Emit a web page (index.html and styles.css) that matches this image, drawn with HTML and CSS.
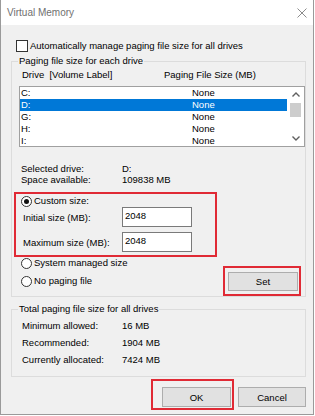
FILE: index.html
```html
<!DOCTYPE html>
<html lang="en">
<head>
  <meta charset="UTF-8">
  <title>Virtual Memory</title>
  <link rel="stylesheet" href="styles.css">
</head>
<body>
  <div class="window">
    <div class="titlebar">
      <span class="title">Virtual Memory</span>
      <svg class="close" width="10" height="10" viewBox="0 0 10 10">
        <path d="M0.5 0.5L9.5 9.5M9.5 0.5L0.5 9.5" stroke="#8c8c8c" stroke-width="1" fill="none"/>
      </svg>
    </div>

    <div class="content">
      <label class="check-row"><span class="checkbox"></span>Automatically manage paging file size for all drives</label>

      <fieldset class="group group-drives">
        <legend>Paging file size for each drive</legend>
        <div class="list-head">
          <span class="col-drive">Drive&nbsp; [Volume Label]</span>
          <span>Paging File Size (MB)</span>
        </div>
        <div class="listbox">
          <ul class="rows">
            <li><span class="col-drive">C:</span><span>None</span></li>
            <li class="selected"><span class="col-drive">D:</span><span>None</span></li>
            <li><span class="col-drive">G:</span><span>None</span></li>
            <li><span class="col-drive">H:</span><span>None</span></li>
            <li><span class="col-drive">I:</span><span>None</span></li>
          </ul>
          <div class="scrollbar">
            <div class="arrow">
              <svg width="8" height="5" viewBox="0 0 8 5"><path d="M0.5 4.5L4 1L7.5 4.5" stroke="#606060" stroke-width="1.4" fill="none"/></svg>
            </div>
            <div class="thumb"></div>
            <div class="arrow arrow-down">
              <svg width="8" height="5" viewBox="0 0 8 5"><path d="M0.5 0.5L4 4L7.5 0.5" stroke="#606060" stroke-width="1.4" fill="none"/></svg>
            </div>
          </div>
        </div>

        <div class="info">
          <div class="info-row"><span class="info-label">Selected drive:</span><span>D:</span></div>
          <div class="info-row"><span class="info-label">Space available:</span><span>109838 MB</span></div>
        </div>

        <div class="highlight custom-box">
          <div class="radio-row"><span class="radio on"></span>Custom size:</div>
          <div class="field-row">
            <span class="field-label">Initial size (MB):</span>
            <input class="field" type="text" value="2048">
          </div>
          <div class="field-row second">
            <span class="field-label">Maximum size (MB):</span>
            <input class="field" type="text" value="2048">
          </div>
        </div>

        <div class="bottom-row">
          <div class="radios">
            <div class="radio-row"><span class="radio"></span>System managed size</div>
            <div class="radio-row gap"><span class="radio"></span>No paging file</div>
          </div>
          <div class="highlight set-box">
            <button class="btn btn-set">Set</button>
          </div>
        </div>
      </fieldset>

      <fieldset class="group group-total">
        <legend>Total paging file size for all drives</legend>
        <div class="total-row"><span class="total-label">Minimum allowed:</span><span>16 MB</span></div>
        <div class="total-row"><span class="total-label">Recommended:</span><span>1904 MB</span></div>
        <div class="total-row"><span class="total-label">Currently allocated:</span><span>7424 MB</span></div>
      </fieldset>

      <div class="buttons">
        <div class="highlight ok-box">
          <button class="btn btn-dialog">OK</button>
        </div>
        <button class="btn btn-dialog btn-cancel">Cancel</button>
      </div>
    </div>
  </div>
</body>
</html>
```

FILE: styles.css
```css
body {
  margin: 0;
  font-family: "Liberation Sans", Arial, sans-serif;
  font-size: 9.5px;
  color: #000;
  background: #fff;
}

.window {
  width: 312px;
  height: 414px;
  border: 1px solid #9a9a9a;
  border-top: none;
  background: #f0f0f0;
}

.titlebar {
  height: 25px;
  background: #fff;
  display: flex;
  align-items: center;
  justify-content: space-between;
  padding: 0 6px;
}

.title {
  font-size: 10px;
  color: #707070;
}

.content {
  padding-left: 10px;
}

.check-row {
  display: flex;
  align-items: center;
  height: 13px;
  margin: 14px 0 0 5px;
}

.checkbox {
  width: 12px;
  height: 12px;
  box-sizing: border-box;
  border: 1px solid #333;
  background: #fff;
  margin-right: 2px;
}

.group {
  margin: 3px 0 0;
  border: 1px solid #dcdcdc;
  min-inline-size: 0;
}

.group legend {
  padding: 0 1px;
  margin-left: -1px;
  line-height: 12px;
}

.group-drives {
  width: 286px;
  padding: 2px 0 0 7px;
}

.list-head {
  display: flex;
  line-height: 12px;
  padding-left: 3px;
}

.list-head .col-drive {
  width: 142px;
}

.listbox {
  margin-top: 5px;
  height: 59px;
  border: 1px solid #a0a0a0;
  background: #fff;
  display: flex;
}

.rows {
  list-style: none;
  margin: 0;
  padding: 0;
  flex: 1;
  overflow: hidden;
}

.rows li {
  display: flex;
  height: 12px;
  line-height: 12px;
  padding-left: 1px;
}

.rows li.selected {
  background: #0078d7;
  color: #fff;
}

.rows .col-drive {
  width: 171px;
}

.scrollbar {
  width: 17px;
  display: flex;
  flex-direction: column;
  align-items: center;
}

.arrow {
  height: 15px;
  display: flex;
  align-items: center;
  justify-content: center;
}

.arrow-down {
  margin-top: auto;
}

.thumb {
  width: 11px;
  height: 14px;
  margin-top: 1px;
  background: #cdcdcd;
}

.info {
  margin-top: 16px;
  padding-left: 2px;
  line-height: 11px;
}

.info-row {
  display: flex;
}

.info-label {
  width: 101px;
}

.highlight {
  border: 2px solid #e02a35;
  box-sizing: border-box;
}

.custom-box {
  margin: 7px 0 0 -5px;
  width: 203px;
  height: 65px;
  padding: 1px 0 0 5px;
}

.radio-row {
  display: flex;
  align-items: center;
  height: 12px;
  line-height: 12px;
}

.radio {
  width: 11px;
  height: 11px;
  box-sizing: border-box;
  border: 1px solid #333;
  border-radius: 50%;
  background: #fff;
  margin-right: 2px;
  display: flex;
  align-items: center;
  justify-content: center;
}

.radio.on::after {
  content: "";
  width: 5px;
  height: 5px;
  border-radius: 50%;
  background: #111;
}

.field-row {
  display: flex;
  align-items: center;
  height: 20px;
}

.field-row.second {
  margin-top: 5px;
}

.field-label {
  width: 99px;
  margin-left: 2px;
}

.field {
  width: 70px;
  height: 20px;
  box-sizing: border-box;
  border: 1px solid #7a7a7a;
  background: #fff;
  padding: 0 2px 4px;
  margin: 0;
  font: inherit;
  color: #000;
  outline: none;
}

.bottom-row {
  display: flex;
  align-items: flex-start;
}

.radios {
  padding-left: 2px;
}

.radio-row.gap {
  margin-top: 6px;
}

.set-box {
  margin: 9px 4px 0 auto;
  width: 78px;
  padding: 4px 1px 3px 3px;
}

.btn {
  background: #e1e1e1;
  border: 1px solid #adadad;
  font: inherit;
  color: #000;
  padding: 0;
  margin: 0;
  display: block;
}

.btn-set {
  width: 70px;
  height: 19px;
}

.group-total {
  width: 283px;
  margin-top: 6px;
  padding: 2px 0 8px 10px;
}

.group-total legend {
  margin-left: -4px;
}

.total-row {
  display: flex;
  line-height: 17px;
}

.total-label {
  width: 100px;
}

.buttons {
  display: flex;
  justify-content: flex-end;
  align-items: flex-start;
  margin-top: 2px;
  padding-right: 7px;
}

.ok-box {
  width: 83px;
  padding: 6px 1px 1px 9px;
}

.btn-dialog {
  width: 69px;
  height: 20px;
}

.btn-cancel {
  width: 68px;
  margin: 8px 0 0 4px;
}
```
